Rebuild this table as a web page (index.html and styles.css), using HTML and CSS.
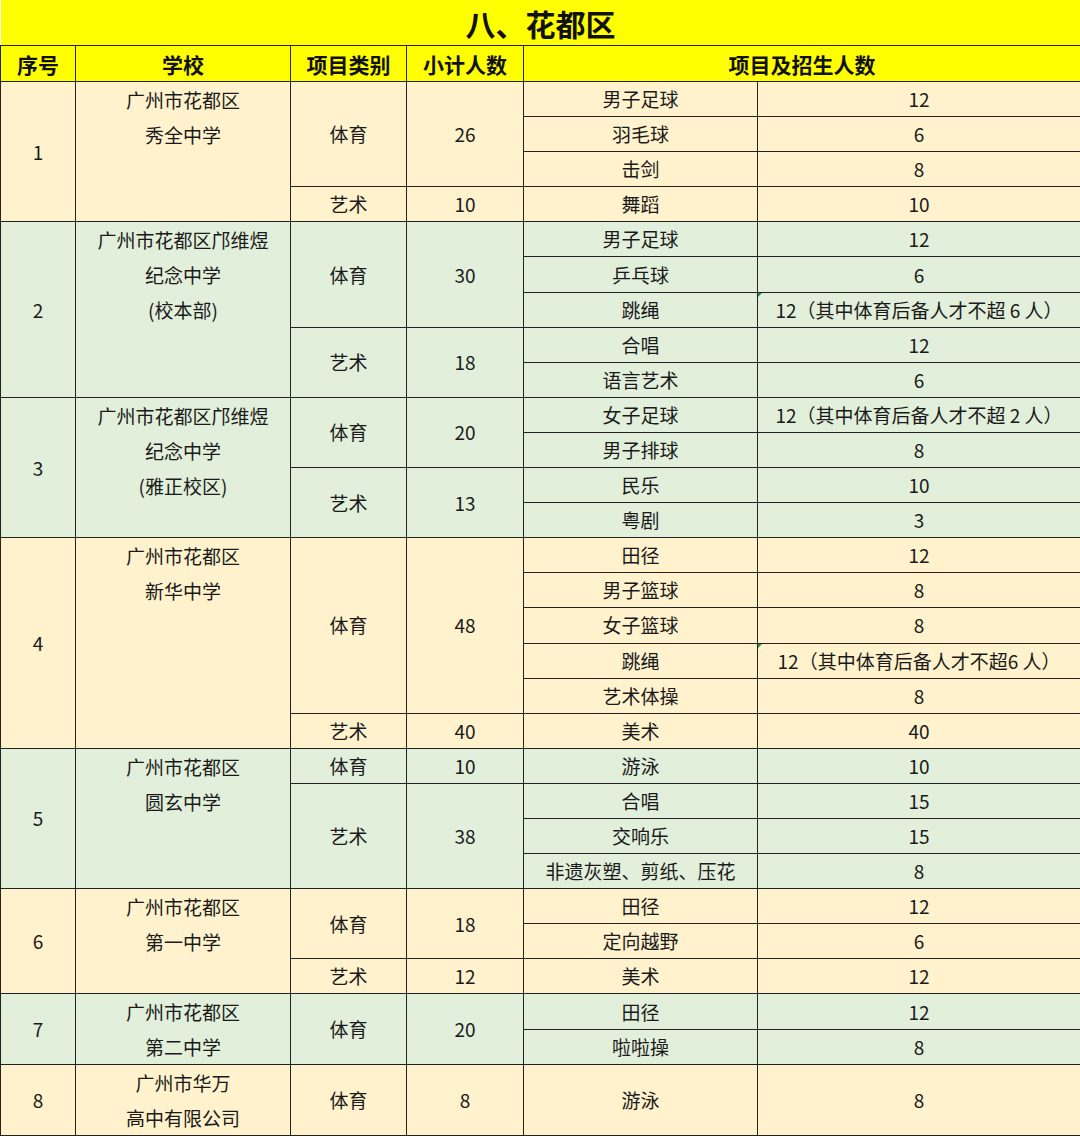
FILE: index.html
```html
<!DOCTYPE html>
<html lang="zh-CN">
<head>
<meta charset="utf-8">
<title>八、花都区</title>
<link rel="stylesheet" href="styles.css">
</head>
<body>
<table class="sheet">
  <colgroup>
    <col class="c-no"><col class="c-school"><col class="c-type"><col class="c-sub"><col class="c-item"><col class="c-num">
  </colgroup>
  <thead>
    <tr class="title-row"><th colspan="6" class="title">八、花都区</th></tr>
    <tr class="head-row">
      <th>序号</th><th>学校</th><th>项目类别</th><th>小计人数</th><th colspan="2">项目及招生人数</th>
    </tr>
  </thead>
  <tbody class="cream">
    <tr><td rowspan="4">1</td><td rowspan="4" class="school">广州市花都区<br>秀全中学</td><td rowspan="3">体育</td><td rowspan="3">26</td><td>男子足球</td><td>12</td></tr>
    <tr><td>羽毛球</td><td>6</td></tr>
    <tr><td>击剑</td><td>8</td></tr>
    <tr><td>艺术</td><td>10</td><td>舞蹈</td><td>10</td></tr>
  </tbody>
  <tbody class="green">
    <tr><td rowspan="5">2</td><td rowspan="5" class="school">广州市花都区邝维煜<br>纪念中学<br>(校本部)</td><td rowspan="3">体育</td><td rowspan="3">30</td><td>男子足球</td><td>12</td></tr>
    <tr><td>乒乓球</td><td>6</td></tr>
    <tr><td>跳绳</td><td class="mark">12（其中体育后备人才不超 6 人）</td></tr>
    <tr><td rowspan="2">艺术</td><td rowspan="2">18</td><td>合唱</td><td>12</td></tr>
    <tr><td>语言艺术</td><td>6</td></tr>
  </tbody>
  <tbody class="green">
    <tr><td rowspan="4">3</td><td rowspan="4" class="school">广州市花都区邝维煜<br>纪念中学<br>(雅正校区)</td><td rowspan="2">体育</td><td rowspan="2">20</td><td>女子足球</td><td>12（其中体育后备人才不超 2 人）</td></tr>
    <tr><td>男子排球</td><td>8</td></tr>
    <tr><td rowspan="2">艺术</td><td rowspan="2">13</td><td>民乐</td><td>10</td></tr>
    <tr><td>粤剧</td><td>3</td></tr>
  </tbody>
  <tbody class="cream">
    <tr><td rowspan="6">4</td><td rowspan="6" class="school">广州市花都区<br>新华中学</td><td rowspan="5">体育</td><td rowspan="5">48</td><td>田径</td><td>12</td></tr>
    <tr><td>男子篮球</td><td>8</td></tr>
    <tr><td>女子篮球</td><td>8</td></tr>
    <tr><td>跳绳</td><td class="mark">12（其中体育后备人才不超6 人）</td></tr>
    <tr><td>艺术体操</td><td>8</td></tr>
    <tr><td>艺术</td><td>40</td><td>美术</td><td>40</td></tr>
  </tbody>
  <tbody class="green">
    <tr><td rowspan="4">5</td><td rowspan="4" class="school">广州市花都区<br>圆玄中学</td><td>体育</td><td>10</td><td>游泳</td><td>10</td></tr>
    <tr><td rowspan="3">艺术</td><td rowspan="3">38</td><td>合唱</td><td>15</td></tr>
    <tr><td>交响乐</td><td>15</td></tr>
    <tr><td>非遗灰塑、剪纸、压花</td><td>8</td></tr>
  </tbody>
  <tbody class="cream">
    <tr><td rowspan="3">6</td><td rowspan="3" class="school">广州市花都区<br>第一中学</td><td rowspan="2">体育</td><td rowspan="2">18</td><td>田径</td><td>12</td></tr>
    <tr><td>定向越野</td><td>6</td></tr>
    <tr><td>艺术</td><td>12</td><td>美术</td><td>12</td></tr>
  </tbody>
  <tbody class="green">
    <tr><td rowspan="2">7</td><td rowspan="2" class="school">广州市花都区<br>第二中学</td><td rowspan="2">体育</td><td rowspan="2">20</td><td>田径</td><td>12</td></tr>
    <tr><td>啦啦操</td><td>8</td></tr>
  </tbody>
  <tbody class="cream">
    <tr class="tall"><td>8</td><td class="school">广州市华万<br>高中有限公司</td><td>体育</td><td>8</td><td>游泳</td><td>8</td></tr>
  </tbody>
</table>
</body>
</html>
```

FILE: styles.css
```css
html, body {
  margin: 0;
  padding: 0;
  background: #ffffff;
}

body {
  font-family: "Noto Sans CJK SC", "Noto Sans", sans-serif;
  color: #1a1a1a;
}

.sheet {
  width: 1080px;
  border-collapse: collapse;
  table-layout: fixed;
  font-size: 19px;
}

.c-no { width: 75px; }
.c-school { width: 215px; }
.c-type { width: 116px; }
.c-sub { width: 117px; }
.c-item { width: 234px; }
.c-num { width: 323px; }

.sheet th,
.sheet td {
  border: 1px solid #222222;
  padding: 0;
  text-align: center;
  vertical-align: middle;
  white-space: nowrap;
  line-height: 34px;
}

.title-row th {
  height: 45px;
  background: #ffff00;
  font-size: 30px;
  font-weight: 700;
  color: #111111;
  border-top: none;
  border-left: none;
  border-right: none;
}

.head-row th {
  height: 35px;
  background: #ffff00;
  font-size: 21px;
  font-weight: 700;
  color: #111111;
}

.sheet tbody tr {
  height: 35.1px;
}

.sheet tbody tr.tall {
  height: 71px;
}

.cream td { background: #fff2cc; }
.green td { background: #e2efda; }

.sheet td.school {
  vertical-align: top;
  line-height: 35px;
}

.sheet td.mark {
  position: relative;
}

.sheet td.mark::before {
  content: "";
  position: absolute;
  left: 0;
  top: 0;
  border-top: 4px solid #2e8b3a;
  border-right: 4px solid transparent;
}
```
